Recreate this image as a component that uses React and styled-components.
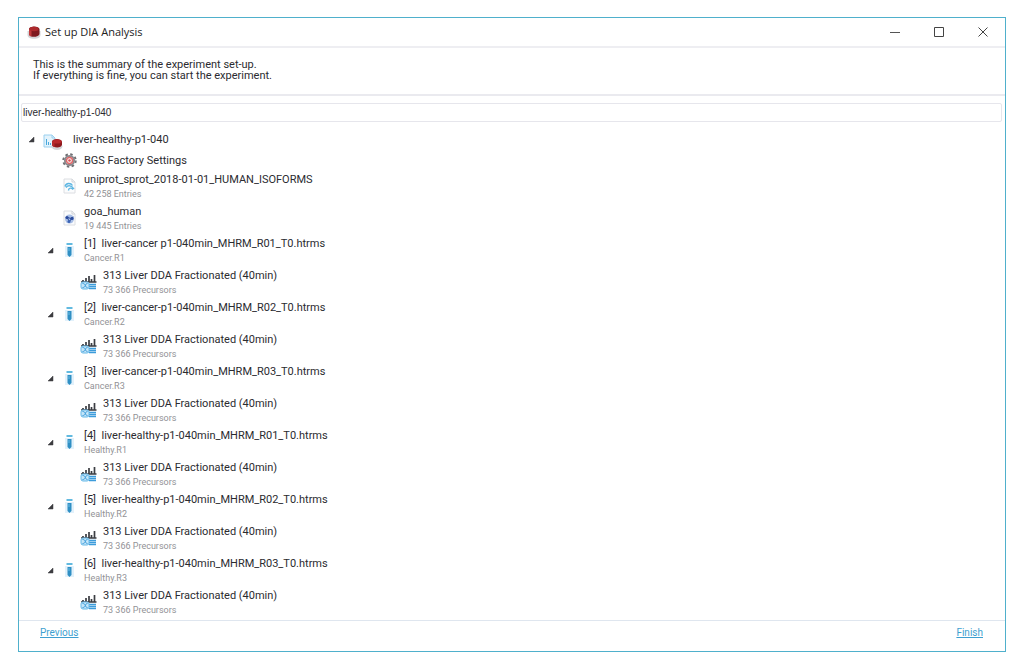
import React, { useState } from "react";
import styled, { createGlobalStyle } from "styled-components";

const GlobalStyle = createGlobalStyle`
  * { box-sizing: border-box; }
  body {
    margin: 0;
    background: #fff;
    color: #2b2b30;
    font: 11px/12px Roboto, "Liberation Sans", Arial, sans-serif;
  }
`;

const Page = styled.div`
  padding: 17px 18px;
`;

const Window = styled.main`
  border: 1px solid #4fb0cc;
  background: #fff;
`;

const TitleBar = styled.header`
  display: flex;
  align-items: center;
  height: 30px;
  padding-left: 8px;
  border-bottom: 2px solid #eeeef2;
`;

const Title = styled.h1`
  flex: 1;
  margin: 0 0 0 4px;
  font: 400 11px/16px "Open Sans", "Segoe UI", sans-serif;
  color: #222;
`;

const WindowButton = styled.button`
  display: flex;
  align-items: center;
  justify-content: center;
  width: 44px;
  height: 28px;
  padding: 0;
  border: 0;
  background: none;
`;

const Intro = styled.p`
  margin: 0;
  padding: 11px 14px 12px;
  height: 48px;
  border-bottom: 2px solid #eaeaef;
  line-height: 11px;
`;

const NameField = styled.input`
  display: block;
  width: calc(100% - 5px);
  height: 19px;
  margin: 7px 3px 6px 2px;
  padding: 0 1px;
  border: 1px solid #e6e6ec;
  border-radius: 2px;
  outline: none;
  color: #2b2b30;
  font: 10px/16px "Liberation Sans", Arial, sans-serif;
`;

const Branch = styled.ul`
  margin: 0;
  padding: 0 0 0 ${(p) => (p.$root ? 8 : 19)}px;
  list-style: none;
`;

const Row = styled.div`
  display: flex;
  align-items: center;
  height: ${(p) => p.$height}px;
`;

const Toggle = styled.button`
  display: flex;
  flex: none;
  width: 14px;
  padding: 0 0 0 1px;
  border: 0;
  background: none;
`;

const ToggleSpace = styled.span`
  flex: none;
  width: 14px;
`;

const IconCell = styled.span`
  display: flex;
  flex: none;
  justify-content: center;
  width: ${(p) => (p.$wide ? 24 : 18)}px;
  margin-right: ${(p) => (p.$wide ? 8 : 6)}px;
  padding-top: ${(p) => (p.$wide ? 5 : 0)}px;
`;

const Label = styled.span`
  display: block;
  white-space: pre;
  line-height: 16px;
`;

const Detail = styled.span`
  display: block;
  color: #929296;
  font-size: 9px;
  line-height: 12px;
`;

const Footer = styled.footer`
  display: flex;
  justify-content: space-between;
  height: 31px;
  margin-top: 2px;
  padding: 6px 22px 0 21px;
  border-top: 1px solid #dfe6ef;
`;

const FooterLink = styled.a`
  color: #3e9fd0;
  font-size: 10px;
  line-height: 12px;
`;

const Drum = ({ size = 14 }) => (
  <svg width={size} height={size} viewBox="0 0 14 14" aria-hidden="true">
    <path d="M.5 6v4c0 2.200 2.500 3.800 6.500 3.800s6.500-1.600 6.500-3.800V6z" fill="#d4d5d8" />
    <path d="M2 4C2 .8 12 .3 12.500 4v4.500c0 4-9.500 4.500-10.500 1z" fill="#7f1a20" />
    <path d="M2 4v5.500c.3 1 1.200 1.700 2.500 2V5z" fill="#c23a3c" />
    <ellipse cx="7" cy="4" rx="4.500" ry="2.200" fill="#ad2a2d" />
  </svg>
);

const ExperimentIcon = () => (
  <svg width="20" height="17" viewBox="0 0 20 17" aria-hidden="true">
    <path d="M1 1h8l3 3v9H1z" fill="#e3f3fc" stroke="#9bd0ee" />
    <path d="M9 1v3h3" fill="none" stroke="#9bd0ee" />
    <path d="M3.500 11V5M5.500 11V8M7.500 11V9" stroke="#49a8dc" />
    <ellipse cx="14" cy="12.500" rx="5.500" ry="3.500" fill="#d4d6d9" />
    <path d="M9 7.500C9 4 18.500 4 19 7.500v3c0 4-9.500 4-10 0z" fill="#8f191d" />
    <path d="M9 7.500v3.500c.3 1 1.200 1.700 2.500 2V8z" fill="#b5282b" />
    <ellipse cx="14" cy="7.500" rx="4.500" ry="2" fill="#b8282b" />
  </svg>
);

const GearIcon = () => (
  <svg width="15" height="15" viewBox="0 0 15 15" aria-hidden="true">
    <circle cx="7.500" cy="7.500" r="6.200" fill="none" stroke="#6f6f73" strokeWidth="2" strokeDasharray="2.435 2.435" />
    <circle cx="7.500" cy="7.500" r="4.600" fill="#fff" stroke="#8b8b8f" strokeWidth="2" />
    <circle cx="7.500" cy="7.500" r="3" fill="#fff" stroke="#e0686a" strokeWidth="1.500" />
    <circle cx="7.500" cy="7.500" r="1.300" fill="#d84a4e" />
  </svg>
);

const Sheet = ({ children }) => (
  <svg width="13" height="16" viewBox="0 0 13 16" aria-hidden="true">
    <path d="M1 1h8l3 3v11H1z" fill="#fbfcfd" stroke="#dcdee2" />
    <path d="M9 1v3h3" fill="none" stroke="#d0d3d8" />
    {children}
  </svg>
);

const ProteinIcon = () => (
  <Sheet>
    <path d="M2 8.500C3 4.500 8 5 9.500 7.500M3 9.500c2-3 6-2 8 1.500M5.500 12.500c0-3 3-3 4.500-1" fill="none" stroke="#5db6e2" strokeWidth="1.400" />
  </Sheet>
);

const OntologyIcon = () => (
  <Sheet>
    <circle cx="6.500" cy="9" r="4.500" fill="#a9bfe6" />
    <path d="M4 7.500l4.500 1-2 3zM8 8l2.500-1" fill="none" stroke="#2a4b9c" />
    <circle cx="4" cy="7.500" r="1.600" fill="#2a4b9c" />
    <circle cx="9" cy="8.500" r="1.600" fill="#2a4b9c" />
    <circle cx="6" cy="11.500" r="1.500" fill="#3a63b4" />
  </Sheet>
);

const TubeIcon = () => (
  <svg width="9" height="16" viewBox="0 0 9 16" aria-hidden="true">
    <path d="M0 4h9v11H0z" fill="#e2f1fb" />
    <path d="M1.500 1h6v2h-6z" fill="#62bae0" />
    <path d="M2.500 5h4v8l-2 2-2-2z" fill="#2f8fc4" />
    <path d="M4 6v3" stroke="#69bbe4" />
  </svg>
);

const LibraryIcon = () => (
  <svg width="17" height="16" viewBox="0 0 17 16" aria-hidden="true">
    <path d="M3 8V6M6 8V4M9 8V2M11.500 8V5M14.500 8V1M1 8h15.500" fill="none" stroke="#3b3d42" strokeWidth="1.700" />
    <path d="M9 10.500h7M9 12.500h7M9 14.500h7" stroke="#3c9cdb" strokeWidth="1.500" />
    <rect x="1" y="8" width="8" height="7" rx="2" fill="#c5e5f8" stroke="#67b9e8" />
    <path d="M2.500 9.500c4 0 2 4 5 4M2.500 13.500c4 0 2-4 5-4" fill="none" stroke="#3c9cdb" />
  </svg>
);

const icons = {
  experiment: ExperimentIcon,
  gear: GearIcon,
  protein: ProteinIcon,
  ontology: OntologyIcon,
  tube: TubeIcon,
  library: LibraryIcon,
};

const runs = [
  ["liver-cancer p1-040min_MHRM_R01_T0.htrms", "Cancer.R1"],
  ["liver-cancer-p1-040min_MHRM_R02_T0.htrms", "Cancer.R2"],
  ["liver-cancer-p1-040min_MHRM_R03_T0.htrms", "Cancer.R3"],
  ["liver-healthy-p1-040min_MHRM_R01_T0.htrms", "Healthy.R1"],
  ["liver-healthy-p1-040min_MHRM_R02_T0.htrms", "Healthy.R2"],
  ["liver-healthy-p1-040min_MHRM_R03_T0.htrms", "Healthy.R3"],
];

const experiment = {
  icon: "experiment",
  label: "liver-healthy-p1-040",
  children: [
    { icon: "gear", label: "BGS Factory Settings" },
    { icon: "protein", label: "uniprot_sprot_2018-01-01_HUMAN_ISOFORMS", detail: "42 258 Entries" },
    { icon: "ontology", label: "goa_human", detail: "19 445 Entries" },
    ...runs.map(([file, condition], i) => ({
      icon: "tube",
      label: `[${i + 1}]  ${file}`,
      detail: condition,
      children: [
        { icon: "library", label: "313 Liver DDA Fractionated (40min)", detail: "73 366 Precursors" },
      ],
    })),
  ],
};

function TreeNode({ node, root = false }) {
  const [open, setOpen] = useState(true);
  const Icon = icons[node.icon];
  return (
    <li>
      <Row $height={node.detail ? 32 : root ? 23 : 19}>
        {node.children ? (
          <Toggle aria-label={`Toggle ${node.label}`} aria-expanded={open} onClick={() => setOpen(!open)}>
            <svg width="7" height="7" viewBox="0 0 7 7" aria-hidden="true">
              <path d="M6 1v5H1z" fill="#3c3c40" stroke="#3c3c40" strokeWidth=".5" />
            </svg>
          </Toggle>
        ) : (
          <ToggleSpace />
        )}
        <IconCell $wide={root}>
          <Icon />
        </IconCell>
        <span>
          <Label>{node.label}</Label>
          {node.detail && <Detail>{node.detail}</Detail>}
        </span>
      </Row>
      {node.children && open && (
        <Branch>
          {node.children.map((child) => (
            <TreeNode key={child.label} node={child} />
          ))}
        </Branch>
      )}
    </li>
  );
}

export default function App() {
  const [name, setName] = useState("liver-healthy-p1-040");
  return (
    <Page>
      <GlobalStyle />
      <Window>
        <TitleBar>
          <Drum />
          <Title>Set up DIA Analysis</Title>
          <WindowButton aria-label="Minimize">
            <svg width="10" height="10" viewBox="0 0 10 10"><path d="M0 5.500h10" stroke="#555" /></svg>
          </WindowButton>
          <WindowButton aria-label="Maximize">
            <svg width="10" height="10" viewBox="0 0 10 10"><path d="M.5.5h9v9h-9z" fill="none" stroke="#444" /></svg>
          </WindowButton>
          <WindowButton aria-label="Close">
            <svg width="10" height="10" viewBox="0 0 10 10"><path d="M.5.5l9 9M9.500.5l-9 9" stroke="#444" /></svg>
          </WindowButton>
        </TitleBar>
        <Intro>
          This is the summary of the experiment set-up.
          <br />
          If everything is fine, you can start the experiment.
        </Intro>
        <NameField aria-label="Experiment name" value={name} onChange={(e) => setName(e.target.value)} />
        <Branch $root>
          <TreeNode node={experiment} root />
        </Branch>
        <Footer>
          <FooterLink href="#previous">Previous</FooterLink>
          <FooterLink href="#finish">Finish</FooterLink>
        </Footer>
      </Window>
    </Page>
  );
}
